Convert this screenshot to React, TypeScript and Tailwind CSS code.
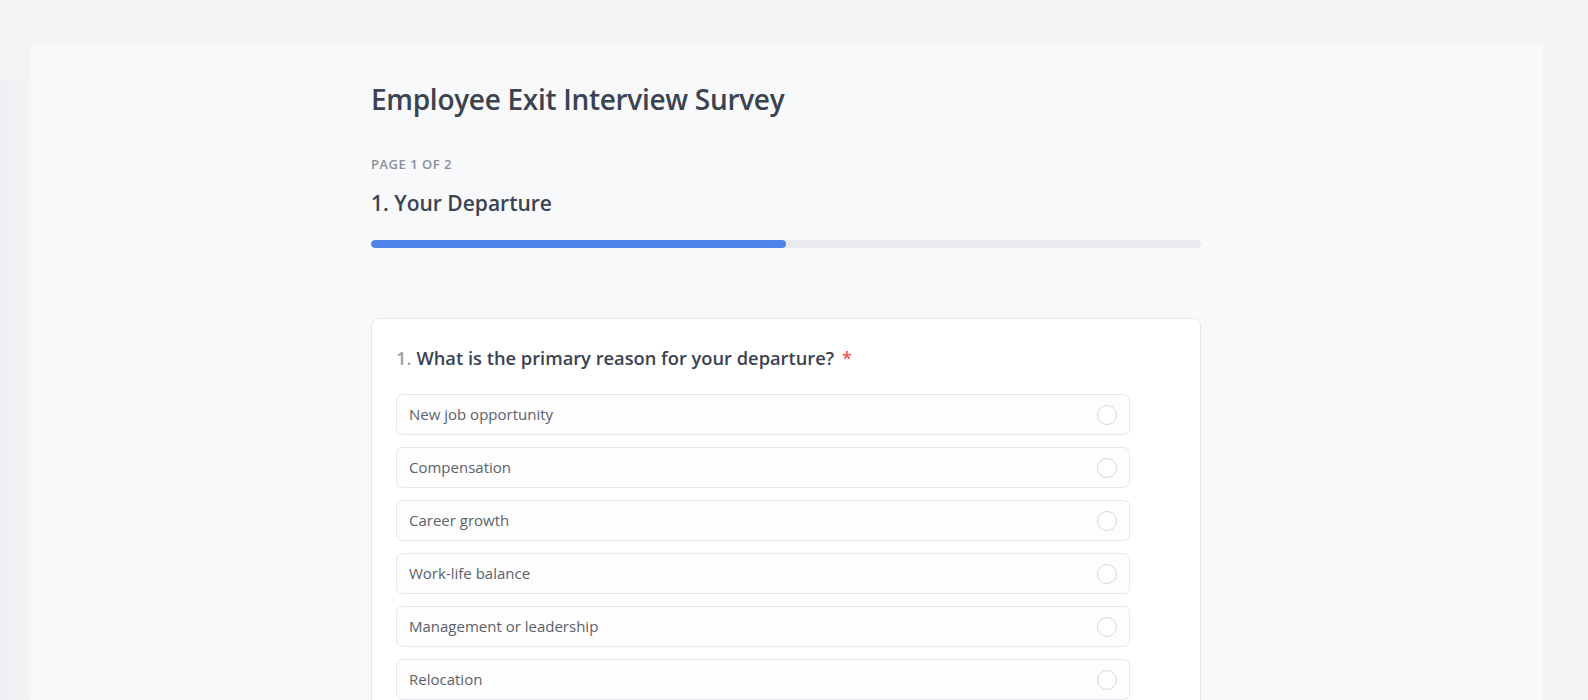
const options = [
  "New job opportunity",
  "Compensation",
  "Career growth",
  "Work-life balance",
  "Management or leadership",
  "Relocation",
  "Personal reasons",
  "Other",
];

export default function App() {
  return (
    <div
      className="relative min-h-screen bg-[#f3f4f6] pl-[31px] pr-[46px] pt-[44px] text-[#3b4250]"
      style={{ fontFamily: '"Open Sans", "Noto Sans", "Liberation Sans", sans-serif' }}
    >
      {/* faint shadow from the collapsed side drawer */}
      <div className="pointer-events-none absolute left-0 top-[80px] bottom-0 w-[26px] bg-gradient-to-r from-[#eceef1] to-transparent" />

      <div className="bg-[#f8f9fb] pb-16 pr-px">
        <div className="mx-auto w-[830px] pt-[38px]">
          <h1 className="text-[28px] font-semibold leading-[34px] tracking-[-0.3px]">Employee Exit Interview Survey</h1>

          <div className="mt-[38px] text-[13px] font-semibold uppercase leading-5 tracking-[0.5px] text-[#8b909b]">
            Page 1 of 2
          </div>
          <h2 className="mt-[14px] text-[21px] font-semibold leading-[30px]">1. Your Departure</h2>

          <div className="mt-[22px] h-2 w-full overflow-hidden rounded-full bg-[#e8eaee]">
            <div className="h-full w-1/2 rounded-full bg-[#4f83ea]" />
          </div>

          <div className="mt-[70px] rounded-lg border border-[#e6e8ec] bg-white px-6 pb-6 pt-[25px] shadow-[0_1px_2px_rgba(0,0,0,0.04)]">
            <div className="flex items-start text-[18.3px] font-semibold leading-7">
              <span className="mr-[5px] text-[#9aa0ab]">1.</span>
              <span>What is the primary reason for your departure?</span>
              <span className="ml-[8px] text-[#f05252]">*</span>
            </div>

            <div className="mt-[22px] flex w-[734px] flex-col gap-3">
              {options.map((opt) => (
                <label
                  key={opt}
                  className="flex h-[41px] cursor-pointer items-center justify-between rounded-md border border-[#e6e8ec] bg-[#fdfdfd] pl-3 pr-3"
                >
                  <span className="text-[15px] text-[#5b616c]">{opt}</span>
                  <span className="h-5 w-5 rounded-full border border-[#d4d7dc] bg-white" />
                </label>
              ))}
            </div>
          </div>
        </div>
      </div>
    </div>
  );
}
